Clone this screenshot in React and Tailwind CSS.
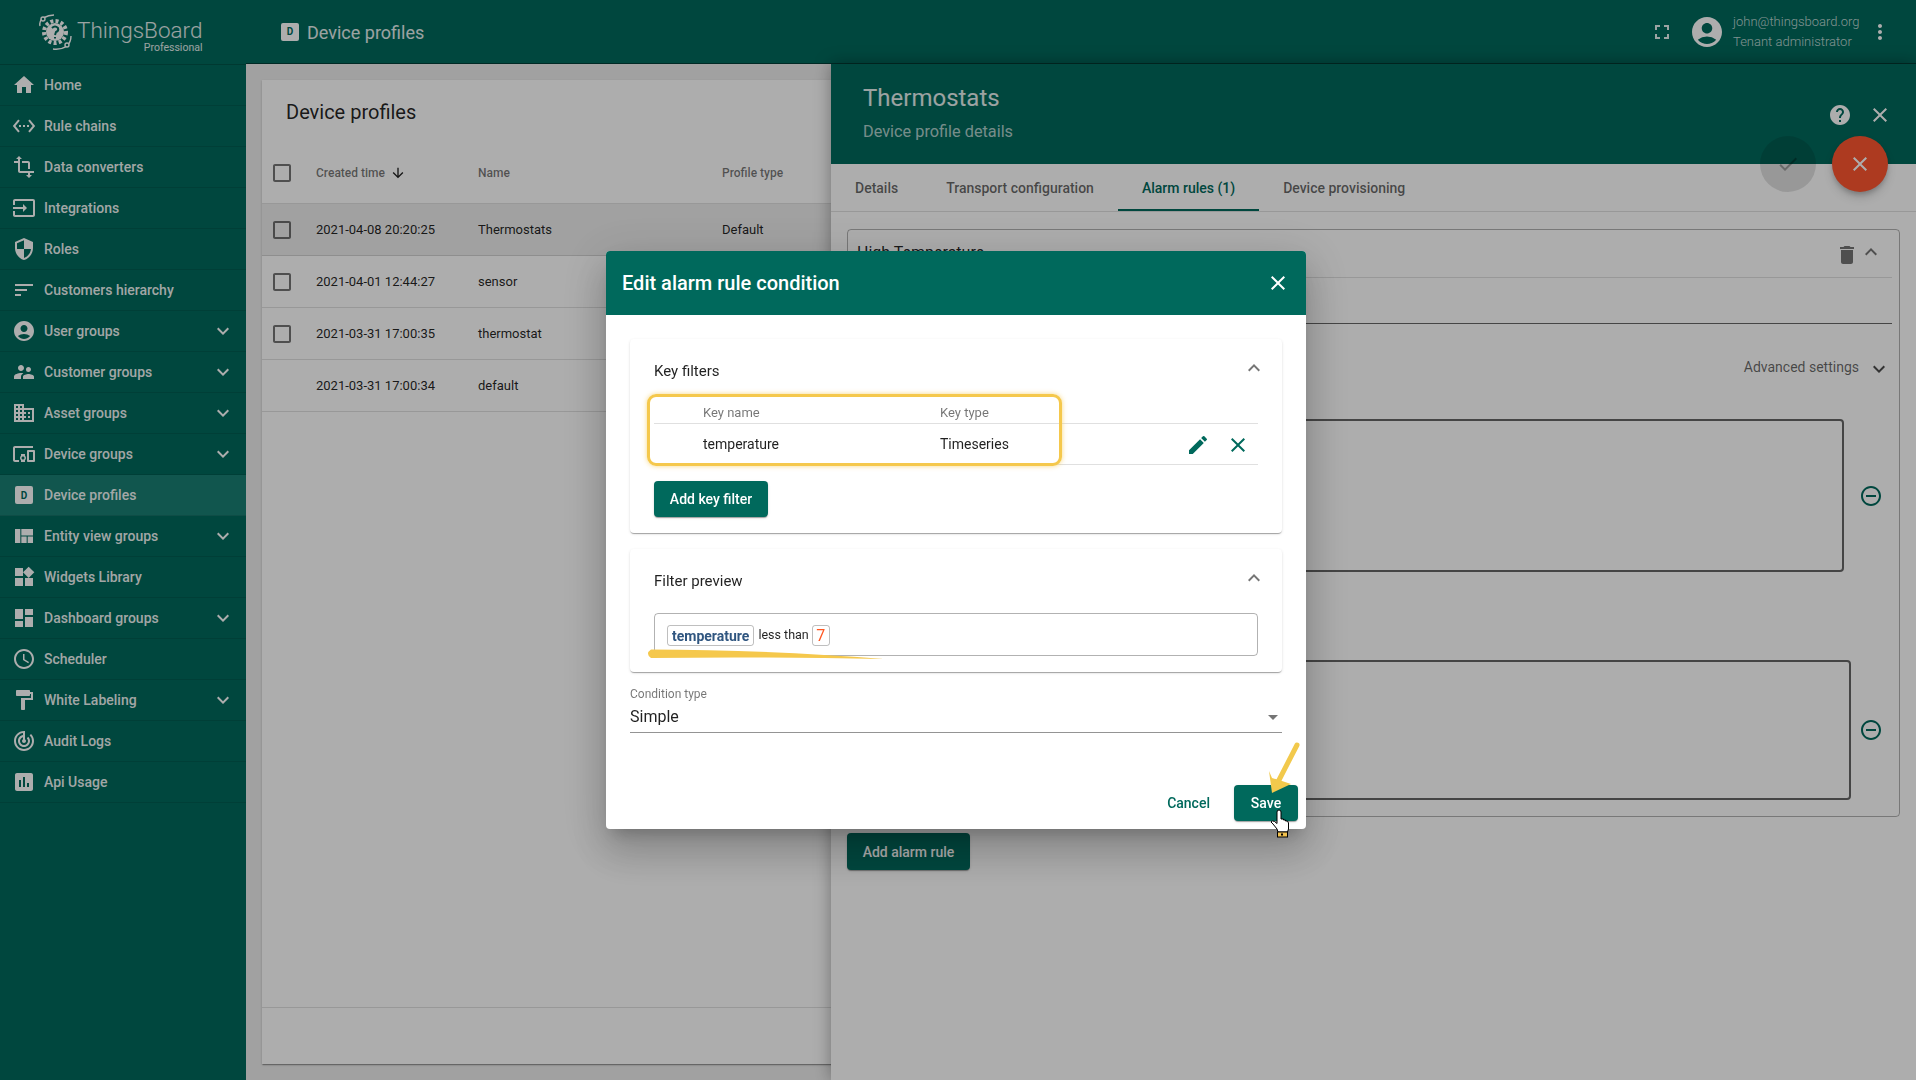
import {
  MdHome, MdSettingsEthernet, MdTransform, MdInput, MdSecurity, MdSort, MdAccountCircle,
  MdSupervisorAccount, MdDomain, MdDevicesOther, MdViewQuilt, MdWidgets, MdDashboard,
  MdSchedule, MdFormatPaint, MdTrackChanges, MdAssessment, MdKeyboardArrowDown, MdKeyboardArrowUp,
  MdClose, MdEdit, MdArrowDropDown, MdDelete, MdHelp, MdCheck, MdFullscreen, MdMoreVert,
  MdRemoveCircleOutline, MdArrowDownward, MdCheckBoxOutlineBlank,
} from "react-icons/md";

const ProfileIcon = ({ className }) => (
  <span className={`flex items-center justify-center rounded-[2px] bg-white font-bold text-[#00695c] ${className}`}>
    D
  </span>
);

const menu = [
  { label: "Home", Icon: MdHome },
  { label: "Rule chains", Icon: MdSettingsEthernet },
  { label: "Data converters", Icon: MdTransform },
  { label: "Integrations", Icon: MdInput },
  { label: "Roles", Icon: MdSecurity },
  { label: "Customers hierarchy", Icon: MdSort },
  { label: "User groups", Icon: MdAccountCircle, more: true },
  { label: "Customer groups", Icon: MdSupervisorAccount, more: true },
  { label: "Asset groups", Icon: MdDomain, more: true },
  { label: "Device groups", Icon: MdDevicesOther, more: true },
  { label: "Device profiles", active: true },
  { label: "Entity view groups", Icon: MdViewQuilt, more: true },
  { label: "Widgets Library", Icon: MdWidgets },
  { label: "Dashboard groups", Icon: MdDashboard, more: true },
  { label: "Scheduler", Icon: MdSchedule },
  { label: "White Labeling", Icon: MdFormatPaint, more: true },
  { label: "Audit Logs", Icon: MdTrackChanges },
  { label: "Api Usage", Icon: MdAssessment },
];

const rows = [
  { time: "2021-04-08 20:20:25", name: "Thermostats", type: "Default", check: true, selected: true },
  { time: "2021-04-01 12:44:27", name: "sensor", type: "", check: true },
  { time: "2021-03-31 17:00:35", name: "thermostat", type: "", check: true },
  { time: "2021-03-31 17:00:34", name: "default", type: "" },
];

const cardShadow = "shadow-[0_2px_1px_-1px_rgba(0,0,0,0.2),0_1px_1px_0_rgba(0,0,0,0.14),0_1px_3px_0_rgba(0,0,0,0.12)]";

const Logo = () => (
  <svg width="40" height="40" viewBox="0 0 40 40" fill="none" className="shrink-0">
    <circle cx="19" cy="20" r="9" fill="#fff" />
    <circle cx="19" cy="20" r="11" stroke="#fff" strokeWidth="4" strokeDasharray="3 2.2" />
    <path d="M16 16 q3-3 6 0 q1 3-2 4 l-1 3 M19 25 v1.5" stroke="#00695c" strokeWidth="2" />
    <path d="M4 14 q-1-5 3-8 q6-3 11-3" stroke="#fff" strokeWidth="1.4" />
    <circle cx="7" cy="7" r="2" stroke="#fff" strokeWidth="1.4" fill="#00695c" />
    <path d="M17 37 q8 1 14-3 q4-4 4-10" stroke="#fff" strokeWidth="1.4" />
    <circle cx="31" cy="33" r="2" stroke="#fff" strokeWidth="1.4" fill="#00695c" />
  </svg>
);

const Sidebar = () => (
  <aside className="flex w-[246px] shrink-0 flex-col bg-[#00695c] text-white">
    <div className="flex h-[65px] items-center border-b border-black/20 pl-[36px]">
      <Logo />
      <div className="mt-[7px] ml-[1px] flex flex-col items-end">
        <span className="text-[22.5px] leading-[26px] font-light text-white/90">ThingsBoard</span>
        <span className="-mt-[1px] text-[10.5px] leading-3 text-white/90">Professional</span>
      </div>
    </div>
    {menu.map(({ label, Icon, more, active }) => (
      <div
        key={label}
        className={`flex h-[41px] items-center border-b border-black/10 pr-[11px] pl-3 ${active ? "bg-[#1a7f73]" : ""}`}
      >
        <span className="flex h-6 w-6 items-center justify-center">
          {Icon ? <Icon size={24} /> : <ProfileIcon className="h-[18px] w-[18px] text-[10px]" />}
        </span>
        <span className="ml-2 flex-1 text-sm font-medium text-white/95">{label}</span>
        {more && <MdKeyboardArrowDown size={24} />}
      </div>
    ))}
  </aside>
);

const TopBar = () => (
  <header className="flex h-16 shrink-0 items-center border-b border-black/40 bg-[#00695c] pr-[24px] pl-[35px] text-white">
    <ProfileIcon className="h-[18px] w-[18px] text-[10px]" />
    <span className="mt-[2px] ml-2 flex-1 text-lg text-white/90">Device profiles</span>
    <MdFullscreen size={24} className="text-white/90" />
    <MdAccountCircle size={36} className="ml-[15px]" />
    <div className="ml-[8px] flex w-[135px] flex-col text-[13px] leading-[20px] font-light text-white/75">
      <span>john@thingsboard.org</span>
      <span>Tenant administrator</span>
    </div>
    <MdMoreVert size={24} />
  </header>
);

const DeviceTable = () => (
  <main className="flex flex-1 flex-col bg-[#eeeeee] p-4 pr-0">
    <div className={`flex flex-1 flex-col bg-white ${cardShadow}`}>
      <div className="flex h-16 items-center pl-6 text-xl text-black/87">Device profiles</div>
      <div className="flex h-[60px] items-center border-b border-black/12 pb-[2px] text-xs font-medium text-black/54">
        <MdCheckBoxOutlineBlank size={24} className="ml-[8px] text-black/54" />
        <span className="ml-[22px] flex w-[162px] items-center">
          Created time
          <MdArrowDownward size={16} className="ml-[5px] text-black/87" />
        </span>
        <span className="w-[244px]">Name</span>
        <span>Profile type</span>
      </div>
      {rows.map((r) => (
        <div
          key={r.time}
          className={`flex h-[52px] items-center border-b border-black/12 text-[13px] text-black/87 ${r.selected ? "bg-[#eeeeee]" : ""}`}
        >
          <span className="ml-[8px] w-6">
            {r.check && <MdCheckBoxOutlineBlank size={24} className="text-black/54" />}
          </span>
          <span className="ml-[22px] w-[162px]">{r.time}</span>
          <span className="w-[244px]">{r.name}</span>
          <span>{r.type}</span>
        </div>
      ))}
      <div className="mt-auto h-[57px] border-t border-black/12" />
    </div>
  </main>
);

const DetailsPanel = () => (
  <section className="absolute top-16 right-0 bottom-0 left-[831px] flex flex-col bg-white shadow-[0_0_16px_rgba(0,0,0,0.35)]">
    <div className="relative flex h-[100px] shrink-0 flex-col bg-[#00695c] pt-4 pl-8 text-white">
      <h2 className="text-2xl leading-9 text-white/90">Thermostats</h2>
      <p className="mt-[6px] text-[16.3px] leading-5 text-white/70">Device profile details</p>
      <div className="absolute top-[39px] right-6 flex items-center gap-[16px]">
        <MdHelp size={24} />
        <MdClose size={24} />
      </div>
    </div>

    <div className="absolute top-[72px] right-7 flex gap-4">
      <span className="flex h-14 w-14 items-center justify-center rounded-full bg-black/12 text-black/30">
        <MdCheck size={24} />
      </span>
      <span className="flex h-14 w-14 items-center justify-center rounded-full bg-[#ff5630] text-white shadow-[0_3px_5px_-1px_rgba(0,0,0,0.2),0_6px_10px_0_rgba(0,0,0,0.14)]">
        <MdClose size={24} />
      </span>
    </div>

    <nav className="flex h-[48px] shrink-0 border-b border-black/12 text-sm font-medium text-black/60">
      <span className="flex items-center px-6">Details</span>
      <span className="flex items-center px-6">Transport configuration</span>
      <span className="flex items-center border-b-2 border-[#00695c] px-6 pt-[2px] text-[#00695c]">Alarm rules (1)</span>
      <span className="flex items-center px-6">Device provisioning</span>
    </nav>

    <div className="flex flex-1 flex-col px-4 pt-[17px]">
      <div className="flex h-[588px] flex-col rounded-[4px] border border-black/30 pr-[7px] pl-[9px]">
        <div className="flex h-[48px] shrink-0 items-start justify-between border-b border-black/12 pt-[11px] text-base text-black/87">
          <span>High Temperature</span>
          <span className="mt-[2px] mr-[9px] flex items-center">
            <MdDelete size={24} className="text-black/54" />
            <MdKeyboardArrowUp size={24} className="-mt-[6px] text-black/54" />
          </span>
        </div>
        <div className="h-[46px] shrink-0 border-b border-black/60" />
        <div className="flex h-[95px] shrink-0 items-start justify-end pt-[33px] pr-[1px] text-sm text-black/60">
          <span>Advanced settings</span>
          <MdKeyboardArrowDown size={24} className="ml-[8px] text-black/70" />
        </div>
        <div className="flex items-center">
          <div className="h-[153px] w-[987px] rounded-[4px] border-2 border-black/60" />
          <MdRemoveCircleOutline size={24} className="ml-[15px] text-[#00695c]" />
        </div>
        <div className="mt-[88px] flex items-center">
          <div className="h-[140px] w-[994px] rounded-[4px] border-2 border-black/60" />
          <MdRemoveCircleOutline size={24} className="ml-[8px] text-[#00695c]" />
        </div>
      </div>
      <button className={`mt-[16px] h-[37px] w-[123px] rounded-[4px] bg-[#00695c] text-sm font-medium text-white ${cardShadow}`}>
        Add alarm rule
      </button>
    </div>
  </section>
);

const EditDialog = () => (
  <div className="fixed inset-0 flex items-center justify-center bg-black/32">
    <div className="mr-[4px] flex h-[578px] w-[700px] flex-col overflow-hidden rounded-[4px] bg-white shadow-[0_11px_15px_-7px_rgba(0,0,0,0.2),0_24px_38px_3px_rgba(0,0,0,0.14),0_9px_46px_8px_rgba(0,0,0,0.12)]">
      <div className="flex h-16 shrink-0 items-center justify-between bg-[#00695c] pr-4 pl-4 text-white">
        <h3 className="text-xl font-medium">Edit alarm rule condition</h3>
        <MdClose size={24} />
      </div>

      <div className="flex flex-1 flex-col px-6 pt-6">
        <div className={`relative rounded-[4px] bg-white px-6 pb-4 ${cardShadow}`}>
          <div className="flex h-16 items-center justify-between text-[15px] text-black/87">
            <span>Key filters</span>
            <MdKeyboardArrowUp size={24} className="-mt-[6px] -mr-[8px] text-black/54" />
          </div>
          <div className="flex h-[21px] border-b border-black/12 pl-[49px] text-[13px] leading-[20px] text-black/54">
            <span className="w-[237px]">Key name</span>
            <span>Key type</span>
          </div>
          <div className="flex h-[41px] items-center border-b border-black/12 pl-[49px] text-sm text-black/87">
            <span className="w-[237px]">temperature</span>
            <span className="flex-1">Timeseries</span>
            <MdEdit size={24} className="mt-[1px] text-[#00695c]" />
            <MdClose size={24} className="mt-[1px] mr-[8px] ml-[16px] text-[#00695c]" />
          </div>
          <button className={`mt-4 h-9 w-[114px] rounded-[4px] bg-[#00695c] text-sm font-medium text-white ${cardShadow}`}>
            Add key filter
          </button>
          <div className="pointer-events-none absolute top-[55px] left-[17px] h-[72px] w-[415px] rounded-[9px] border-[3px] border-[#f5c84c] shadow-[0_0_5px_rgba(245,200,76,0.7)]" />
        </div>

        <div className={`mt-4 rounded-[4px] bg-white px-6 pb-4 ${cardShadow}`}>
          <div className="flex h-16 items-center justify-between text-[15px] text-black/87">
            <span>Filter preview</span>
            <MdKeyboardArrowUp size={24} className="-mt-[6px] -mr-[8px] text-black/54" />
          </div>
          <div className="flex h-[43px] items-start rounded-[4px] border border-black/30 pt-[11px] pl-3 text-[12.5px] text-black/87">
            <span className="flex h-[21px] items-center rounded-[3px] border border-black/25 px-[4px] text-sm font-bold text-[#305680]">
              temperature
            </span>
            <span className="ml-[4px] flex h-[21px] items-center">less than</span>
            <span className="ml-[3px] flex h-[21px] w-[18px] items-center justify-center rounded-[3px] border border-black/25 text-base text-[#ff5722]">
              7
            </span>
          </div>
        </div>

        <label className="mt-[15px] text-xs leading-[14px] text-black/54">Condition type</label>
        <div className="flex h-[32px] items-center justify-between border-b border-black/42 text-base leading-5 text-black/87">
          <span>Simple</span>
          <MdArrowDropDown size={24} className="-mr-[3px] text-black/54" />
        </div>
      </div>

      <div className="flex shrink-0 items-center justify-end pr-2 pb-2">
        <button className="mr-6 text-sm font-medium text-[#00695c]">Cancel</button>
        <button className={`h-9 w-16 rounded-[4px] bg-[#00695c] text-sm font-medium text-white ${cardShadow}`}>
          Save
        </button>
      </div>
    </div>
  </div>
);

// hand drawn marks on top of the screenshot
const Annotations = () => (
  <svg className="pointer-events-none fixed inset-0" width="1916" height="1080" viewBox="0 0 1916 1080">
    <path d="M651 649.500 Q760 649.500 884 659 Q760 656.500 651 658 Q645 653.500 651 649.500Z" fill="#f5c84c" />
    <path d="M1297 745 L1278 782" stroke="#f2c94c" strokeWidth="5" strokeLinecap="round" />
    <path d="M1269 771 L1272 793 L1291 784 L1279 780 L1272 778Z" fill="#f2c94c" />
    <path
      d="M1277 812 a2 2 0 0 1 4 0 V819 h2.5 v1 h2 v1 h2 l1 2 V829 l-1 3 H1278 l-1-3 -4-5 -2-2 q1-2 3.500-.5 l2.500 2Z"
      fill="#fff"
      stroke="#000"
      strokeWidth="1"
    />
    <rect x="1277.5" y="832" width="10" height="5" fill="#f2c14e" stroke="#000" />
    <rect x="1281" y="833.5" width="2" height="2" fill="#000" />
  </svg>
);

export default function App() {
  return (
    <div className="relative flex h-screen w-full overflow-hidden font-['Roboto',sans-serif]">
      <Sidebar />
      <div className="flex min-w-0 flex-1 flex-col">
        <TopBar />
        <DeviceTable />
      </div>
      <DetailsPanel />
      <EditDialog />
      <Annotations />
    </div>
  );
}
